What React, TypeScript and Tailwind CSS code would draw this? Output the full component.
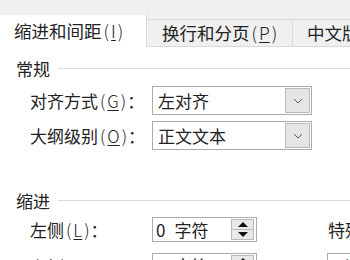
import React from "react";

const font = { fontFamily: '"Noto Sans CJK SC", "Noto Sans", sans-serif' };

function U({ c }: { c: string }) {
  return (
    <span className="font-light">
      <span className="ml-[2px]">(</span>
      <span className="mx-[2px] underline underline-offset-2 decoration-1">{c}</span>
      <span className="mr-[1px]">)</span>
    </span>
  );
}

function Header({ text }: { text: string }) {
  return (
    <div className="flex items-center h-[20px]">
      <span className="text-[17px] leading-none text-[#222] shrink-0">{text}</span>
      <div className="flex-1 h-px bg-[#dcdcdc] ml-[8px]" />
    </div>
  );
}

function Select({ value }: { value: string }) {
  return (
    <div className="shrink-0 w-[160px] h-[29px] border border-[#acacac] bg-white flex items-center justify-between">
      <span className="pl-[5px] text-[17px] leading-none text-[#222]">{value}</span>
      <div className="w-[25px] h-[25px] mr-px bg-[#e5e5e5] border border-[#b9b9b9] flex items-center justify-center">
        <svg width="10" height="6" viewBox="0 0 10 6">
          <path d="M1 1 L5 5 L9 1" fill="none" stroke="#606060" strokeWidth="1" />
        </svg>
      </div>
    </div>
  );
}

function Spin({ num, unit }: { num: string; unit: string }) {
  return (
    <div className="shrink-0 w-[105px] h-[25px] border border-[#acacac] bg-white flex items-center justify-between">
      <span className="pl-[3px] text-[17px] leading-none text-[#222] whitespace-nowrap">
        <span>{num}</span>
        <span className="ml-[9px]">{unit}</span>
      </span>
      <div className="w-[23px] h-[21px] mr-[2px] flex flex-col border border-[#b9b9b9]">
        <div className="flex-1 bg-[#e8e8e8] flex items-center justify-center border-b border-[#b9b9b9]">
          <svg width="10" height="5" viewBox="0 0 10 5">
            <path d="M0 5 L5 0 L10 5 Z" fill="#111" />
          </svg>
        </div>
        <div className="flex-1 bg-[#e8e8e8] flex items-center justify-center">
          <svg width="10" height="5" viewBox="0 0 10 5">
            <path d="M0 0 L5 5 L10 0 Z" fill="#111" />
          </svg>
        </div>
      </div>
    </div>
  );
}

const label = "shrink-0 w-[122px] text-[17px] leading-none text-[#222] whitespace-nowrap";

export default function App() {
  return (
    <div className="w-[350px] h-[260px] overflow-hidden bg-white" style={font}>
      {/* Tab strip */}
      <div className="h-[47px] bg-[#f0f0f0] flex items-end">
        <div className="shrink-0 w-[147px] h-[32px] bg-white border-r border-[#d9d9d9] flex items-center pl-[14px] text-[17.5px] leading-none text-[#222] whitespace-nowrap">
          缩进和间距<U c="I" />
        </div>
        <div className="shrink-0 w-[146px] h-[28px] bg-[#f0f0f0] border-t border-r border-b border-[#d9d9d9] flex items-center pl-[15px] text-[17.5px] leading-none text-[#222] whitespace-nowrap">
          换行和分页<U c="P" />
        </div>
        <div className="flex-1 min-w-0 h-[28px] bg-[#f0f0f0] border-t border-b border-[#d9d9d9] flex items-center pl-[14px] text-[17.5px] leading-none text-[#222] whitespace-nowrap overflow-hidden">
          中文版式
        </div>
      </div>

      {/* Content */}
      <div className="pl-[16px]">
        <div className="mt-[11px]">
          <Header text="常规" />
        </div>
        <div className="mt-[8px] flex items-center pl-[14px]">
          <div className={label}>
            对齐方式<U c="G" />：
          </div>
          <Select value="左对齐" />
        </div>
        <div className="mt-[6px] flex items-center pl-[14px]">
          <div className={label}>
            大纲级别<U c="O" />：
          </div>
          <Select value="正文文本" />
        </div>

        <div className="mt-[40px]">
          <Header text="缩进" />
        </div>
        <div className="mt-[7px] flex items-center pl-[14px]">
          <div className={label}>
            左侧<U c="L" />：
          </div>
          <Spin num="0" unit="字符" />
          <div className="shrink-0 ml-[71px] text-[17px] leading-none text-[#222] whitespace-nowrap">
            特殊格式<U c="S" />：
          </div>
        </div>
        <div className="mt-[11px] flex items-start pl-[14px]">
          <div className={`${label} pt-[5px]`}>
            右侧<U c="R" />：
          </div>
          <Spin num="0" unit="字符" />
          <div className="shrink-0 ml-[70px] w-[80px] h-[29px] border border-[#acacac] bg-white pt-[4px] pl-[4px] text-[17px] leading-none text-[#222] whitespace-nowrap">
            （无）
          </div>
        </div>
      </div>
    </div>
  );
}
